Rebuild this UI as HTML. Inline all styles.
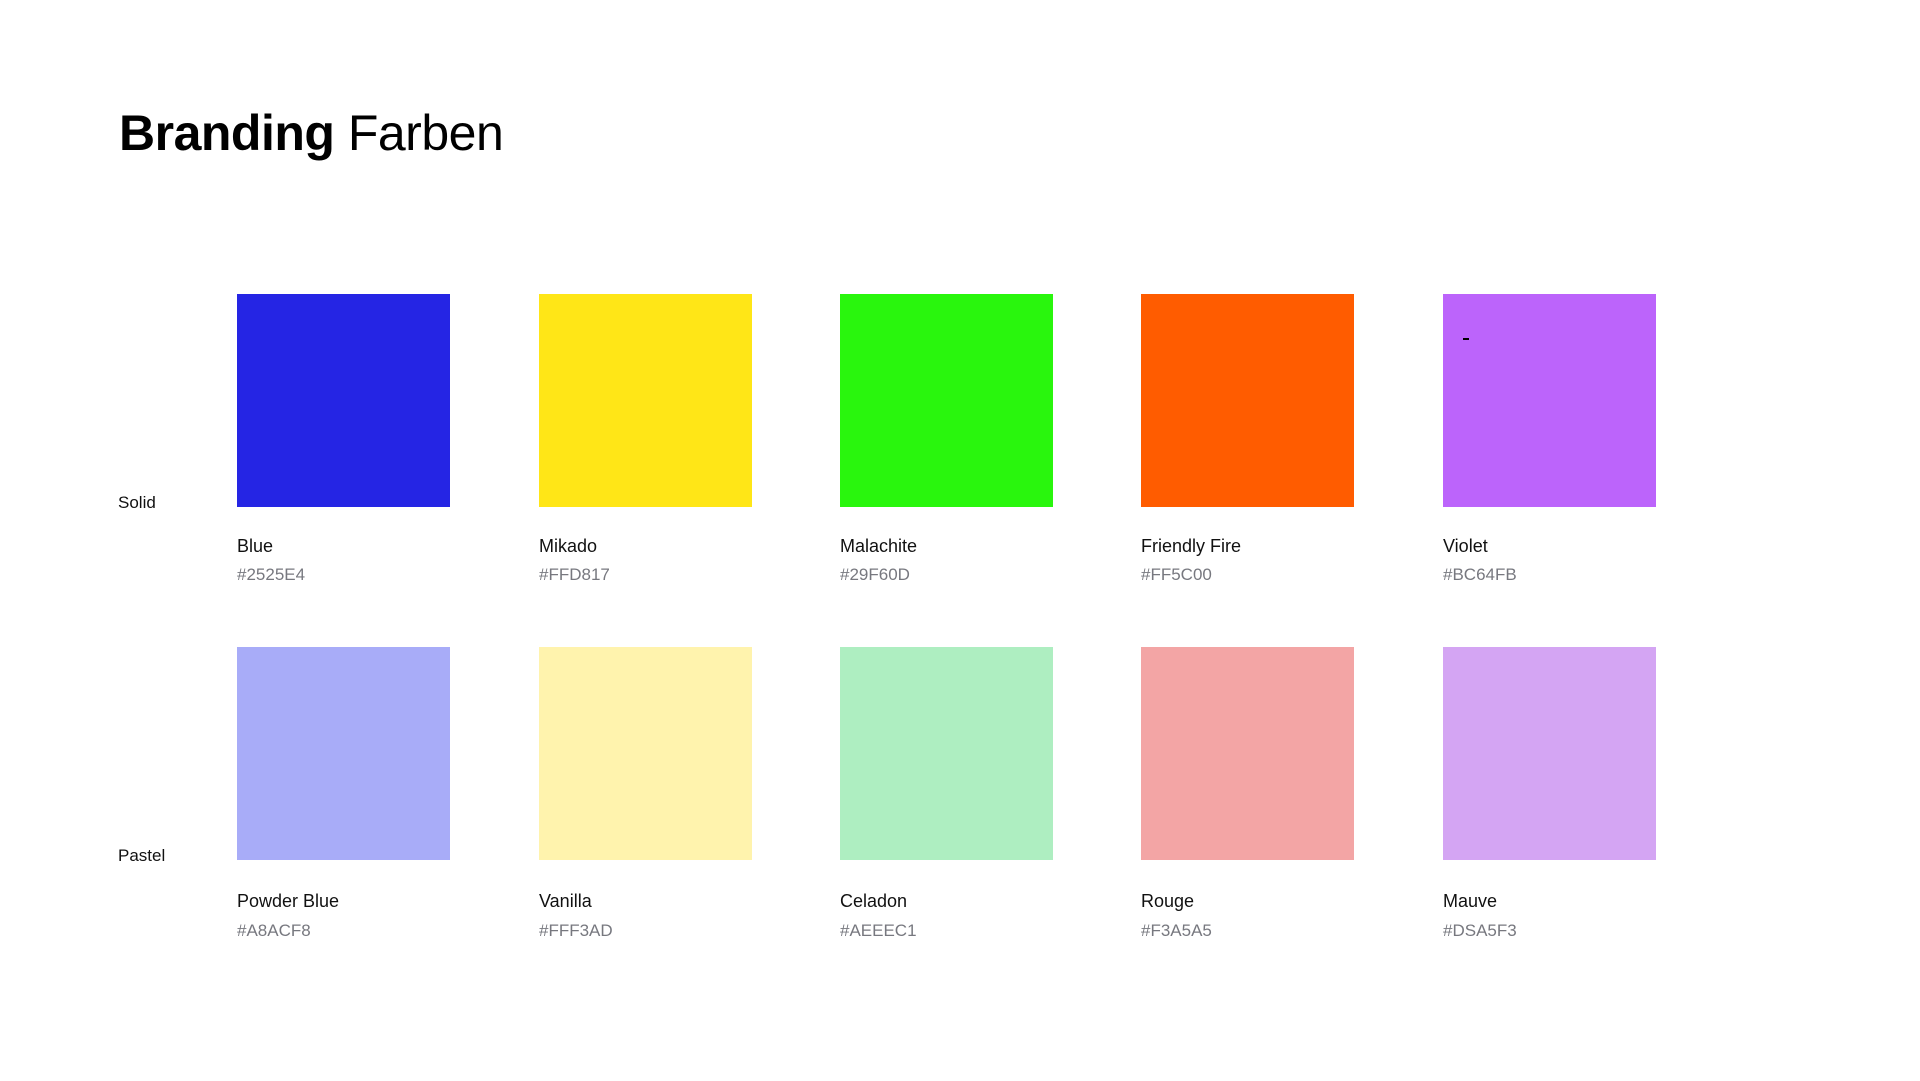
<!DOCTYPE html>
<html><head><meta charset="utf-8"><style>
html,body{margin:0;padding:0;background:#fff;width:1920px;height:1081px;overflow:hidden;position:relative;font-family:"Liberation Sans",sans-serif;}
.t{position:absolute;white-space:nowrap;line-height:1;}
.sw{position:absolute;width:213px;height:213px;}
.n{font-size:18px;color:#111;}
.h{font-size:17px;color:#77787f;}
</style></head><body>
<div class="t" style="left:119px;top:108px;font-size:50px;color:#000;letter-spacing:-0.5px"><b>Branding</b> Farben</div>
<div class="t" style="left:118px;top:494px;font-size:17px;color:#111">Solid</div>
<div class="t" style="left:118px;top:847px;font-size:17px;color:#111">Pastel</div>

<div class="sw" style="left:237px;top:294px;background:#2525E4"></div>
<div class="sw" style="left:539px;top:294px;background:#FFE617"></div>
<div class="sw" style="left:840px;top:294px;background:#29F60D"></div>
<div class="sw" style="left:1141px;top:294px;background:#FF5C00"></div>
<div class="sw" style="left:1443px;top:294px;background:#BC64FB"></div>
<div style="position:absolute;left:1463px;top:338px;width:6px;height:2px;background:#000"></div>

<div class="sw" style="left:237px;top:647px;background:#A8ACF8"></div>
<div class="sw" style="left:539px;top:647px;background:#FFF3AD"></div>
<div class="sw" style="left:840px;top:647px;background:#AEEEC1"></div>
<div class="sw" style="left:1141px;top:647px;background:#F3A5A5"></div>
<div class="sw" style="left:1443px;top:647px;background:#D4A5F3"></div>

<div class="t n" style="left:237px;top:537px">Blue</div>
<div class="t n" style="left:539px;top:537px">Mikado</div>
<div class="t n" style="left:840px;top:537px">Malachite</div>
<div class="t n" style="left:1141px;top:537px">Friendly Fire</div>
<div class="t n" style="left:1443px;top:537px">Violet</div>
<div class="t h" style="left:237px;top:566px">#2525E4</div>
<div class="t h" style="left:539px;top:566px">#FFD817</div>
<div class="t h" style="left:840px;top:566px">#29F60D</div>
<div class="t h" style="left:1141px;top:566px">#FF5C00</div>
<div class="t h" style="left:1443px;top:566px">#BC64FB</div>

<div class="t n" style="left:237px;top:892px">Powder Blue</div>
<div class="t n" style="left:539px;top:892px">Vanilla</div>
<div class="t n" style="left:840px;top:892px">Celadon</div>
<div class="t n" style="left:1141px;top:892px">Rouge</div>
<div class="t n" style="left:1443px;top:892px">Mauve</div>
<div class="t h" style="left:237px;top:922px">#A8ACF8</div>
<div class="t h" style="left:539px;top:922px">#FFF3AD</div>
<div class="t h" style="left:840px;top:922px">#AEEEC1</div>
<div class="t h" style="left:1141px;top:922px">#F3A5A5</div>
<div class="t h" style="left:1443px;top:922px">#DSA5F3</div>
</body></html>
